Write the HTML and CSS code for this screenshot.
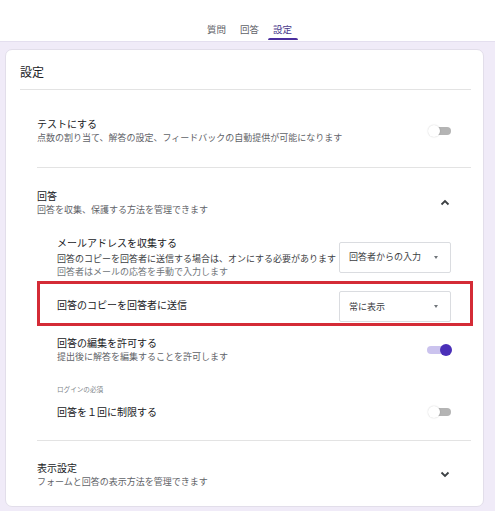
FILE: index.html
```html
<!DOCTYPE html>
<html lang="ja">
<head>
<meta charset="utf-8">
<title>設定</title>
<link rel="stylesheet" href="styles.css">
</head>
<body>
<header class="topbar">
  <nav class="tabs">
    <span class="tab">質問</span>
    <span class="tab">回答</span>
    <span class="tab active">設定</span>
  </nav>
</header>
<main class="page">
  <section class="card">
    <div class="card-head">設定</div>

    <div class="group group-test">
      <div class="row">
        <div class="text">
          <div class="title">テストにする</div>
          <div class="sub">点数の割り当て、解答の設定、フィードバックの自動提供が可能になります</div>
        </div>
        <span class="toggle"><span class="track"></span><span class="thumb"></span></span>
      </div>
    </div>

    <div class="group group-answers">
      <div class="row">
        <div class="text">
          <div class="title">回答</div>
          <div class="sub">回答を収集、保護する方法を管理できます</div>
        </div>
        <span class="chev"><svg width="10" height="7" viewBox="0 0 10 7"><polyline points="1.5,5.5 5,2 8.5,5.5" fill="none" stroke="#3c4043" stroke-width="1.8"/></svg></span>
      </div>

      <div class="items">
        <div class="item item-mail">
          <div class="text">
            <div class="title title-tight">メールアドレスを収集する</div>
            <div class="note note-strong">回答のコピーを回答者に送信する場合は、オンにする必要があります</div>
            <div class="note">回答者はメールの応答を手動で入力します</div>
          </div>
          <div class="select"><span class="select-text">回答者からの入力</span><span class="caret"></span></div>
        </div>

        <div class="item item-copy">
          <div class="text text-lift">
            <div class="title">回答のコピーを回答者に送信</div>
          </div>
          <div class="select"><span class="select-text">常に表示</span><span class="caret"></span></div>
        </div>

        <div class="item item-edit">
          <div class="text">
            <div class="title">回答の編集を許可する</div>
            <div class="sub">提出後に解答を編集することを許可します</div>
          </div>
          <span class="toggle on"><span class="track"></span><span class="thumb"></span></span>
        </div>

        <div class="label">ログインの必須</div>

        <div class="item item-limit">
          <div class="text">
            <div class="title">回答を１回に制限する</div>
          </div>
          <span class="toggle"><span class="track"></span><span class="thumb"></span></span>
        </div>
      </div>
    </div>

    <div class="group group-display">
      <div class="row">
        <div class="text">
          <div class="title">表示設定</div>
          <div class="sub">フォームと回答の表示方法を管理できます</div>
        </div>
        <span class="chev"><svg width="10" height="7" viewBox="0 0 10 7"><polyline points="1.5,1.5 5,5 8.5,1.5" fill="none" stroke="#3c4043" stroke-width="1.8"/></svg></span>
      </div>
    </div>
  </section>
</main>
</body>
</html>
```

FILE: styles.css
```css
* { box-sizing: border-box; }

html, body {
  margin: 0;
  padding: 0;
}

body {
  background: #f0ebf8;
  font-family: "Noto Sans CJK JP", "Noto Sans", sans-serif;
  color: #202124;
  overflow: hidden;
}

.topbar {
  background: #ffffff;
  height: 41px;
  box-shadow: 0 1px 0 #e4dfef;
}

.tabs {
  display: flex;
  justify-content: center;
  gap: 3px;
  padding-left: 4px;
  height: 41px;
}

.tab {
  position: relative;
  padding: 22px 5.5px 0;
  font-size: 9.5px;
  line-height: 14px;
  color: #5f6368;
}

.tab.active {
  color: #4a3a8c;
}

.tab.active::after {
  content: "";
  position: absolute;
  left: 0;
  right: 0;
  bottom: 1px;
  height: 2px;
  border-radius: 2px 2px 0 0;
  background: #4b2f9e;
}

.page {
  padding: 8px 11px 0 5px;
}

.card {
  background: #ffffff;
  border: 1px solid #e2deea;
  border-radius: 7px;
  padding: 0 12px 0 14px;
}

.card-head {
  font-size: 12px;
  line-height: 16px;
  padding: 14px 0 9px;
  border-bottom: 1px solid #e3e3e3;
  color: #202124;
}

.group {
  margin-left: 17px;
  border-bottom: 1px solid #e3e3e3;
}

.group-test { padding: 26px 0 22px; }
.group-answers { padding: 20px 0 21px; }
.group-display { padding: 19px 0 17px; border-bottom: none; }

.row {
  display: flex;
  align-items: center;
  justify-content: space-between;
  padding-right: 20px;
}

.text {
  white-space: nowrap;
  min-width: 0;
}

.title {
  font-size: 10px;
  line-height: 15px;
  color: #202124;
}

.title-tight {
  line-height: 14px;
  margin-bottom: 2px;
}

.sub {
  font-size: 9px;
  line-height: 14px;
  color: #5f6368;
}

.note {
  font-size: 9px;
  line-height: 13px;
  color: #70757a;
}

.note-strong {
  color: #3c4043;
}

.items {
  padding: 0 20px;
}

.item {
  display: flex;
  align-items: center;
  justify-content: space-between;
}

.item-mail { margin-top: 19px; }

.item-copy {
  position: relative;
  margin-top: 5px;
  padding: 8px 0 5px;
}

.item-copy::after {
  content: "";
  position: absolute;
  top: -2px;
  bottom: 1px;
  left: -20px;
  right: -22px;
  border: 3px solid #d42b36;
  pointer-events: none;
}

.text-lift { margin-bottom: 4px; }

.item-edit { margin-top: 8px; }

.label {
  margin-top: 20px;
  font-size: 6.6px;
  line-height: 10px;
  color: #80868b;
}

.item-limit { margin-top: 10px; }

.select {
  flex-shrink: 0;
  width: 112px;
  height: 31px;
  border: 1px solid #dadce0;
  border-radius: 2px;
  display: flex;
  align-items: center;
  justify-content: space-between;
  padding: 0 12px 0 9px;
}

.select-text {
  font-size: 9px;
  line-height: 12px;
  color: #3c4043;
}

.caret {
  width: 0;
  height: 0;
  border-left: 2.5px solid transparent;
  border-right: 2.5px solid transparent;
  border-top: 3px solid #70757a;
}

.toggle {
  position: relative;
  flex-shrink: 0;
  width: 23px;
  height: 14px;
}

.toggle .track {
  position: absolute;
  right: 0;
  top: 3px;
  width: 21px;
  height: 8px;
  border-radius: 4px;
  background: #b4b4b4;
}

.toggle .thumb {
  position: absolute;
  left: 0;
  top: 1px;
  width: 12px;
  height: 12px;
  border-radius: 50%;
  background: #ffffff;
  box-shadow: 0 0 1.5px rgba(0, 0, 0, 0.22);
}

.toggle.on .track {
  right: 3px;
  background: #cbc3ee;
}

.toggle.on .thumb {
  left: auto;
  right: -1px;
  background: #4a2fb8;
  box-shadow: none;
}

.chev {
  flex-shrink: 0;
  width: 12px;
  display: flex;
  justify-content: center;
}

.chev svg { display: block; }
```
